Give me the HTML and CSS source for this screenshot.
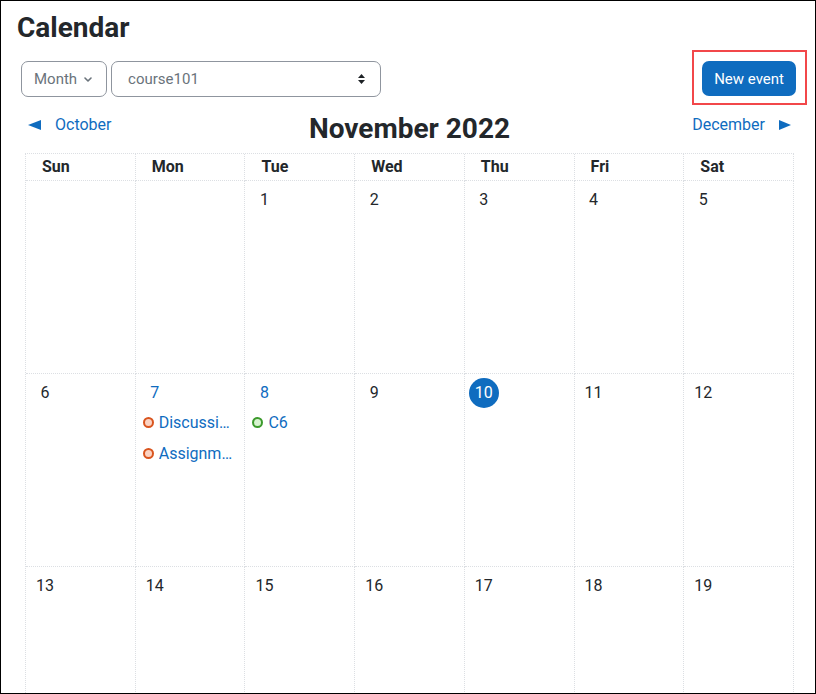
FILE: index.html
```html
<!DOCTYPE html>
<html lang="en">
<head>
<meta charset="utf-8">
<title>Calendar</title>
<link rel="stylesheet" href="styles.css">
</head>
<body>
<div class="page">
  <h2 class="title">Calendar</h2>
  <div class="controls">
    <div class="filters">
      <div class="select select-view">
        <span>Month</span>
        <svg class="chev" width="8" height="5" viewBox="0 0 8 5"><path d="M1 1 L4 4 L7 1" fill="none" stroke="#6a737b" stroke-width="1.6" stroke-linecap="round" stroke-linejoin="round"/></svg>
      </div>
      <div class="select select-course">
        <span>course101</span>
        <svg class="updown" width="7" height="10" viewBox="0 0 7 10"><path d="M3.5 0 L7 4 L0 4 Z M0 6 L7 6 L3.5 10 Z" fill="#1d2125"/></svg>
      </div>
    </div>
    <div class="highlight"><button class="btn-primary">New event</button></div>
  </div>
  <div class="nav">
    <a class="nav-link prev" href="#">
      <svg width="13" height="10" viewBox="0 0 13 10"><path d="M0 5 L13 0 L13 10 Z" fill="#0f6cbf"/></svg>
      <span>October</span>
    </a>
    <h3 class="month-title">November 2022</h3>
    <a class="nav-link next" href="#">
      <span>December</span>
      <svg width="12" height="10" viewBox="0 0 12 10"><path d="M12 5 L0 0 L0 10 Z" fill="#0f6cbf"/></svg>
    </a>
  </div>
  <div class="calendar">
    <div class="head">Sun</div>
    <div class="head">Mon</div>
    <div class="head">Tue</div>
    <div class="head">Wed</div>
    <div class="head">Thu</div>
    <div class="head">Fri</div>
    <div class="head">Sat</div>

    <div class="day"></div>
    <div class="day"></div>
    <div class="day"><span class="num">1</span></div>
    <div class="day"><span class="num">2</span></div>
    <div class="day"><span class="num">3</span></div>
    <div class="day"><span class="num">4</span></div>
    <div class="day"><span class="num">5</span></div>

    <div class="day"><span class="num">6</span></div>
    <div class="day">
      <a class="num link" href="#">7</a>
      <ul class="events">
        <li class="event"><span class="dot dot-orange"></span><a class="ev-name" href="#">Discussion forum</a></li>
        <li class="event"><span class="dot dot-orange"></span><a class="ev-name" href="#">Assignment 1</a></li>
      </ul>
    </div>
    <div class="day">
      <a class="num link" href="#">8</a>
      <ul class="events">
        <li class="event"><span class="dot dot-green"></span><a class="ev-name" href="#">C6</a></li>
      </ul>
    </div>
    <div class="day"><span class="num">9</span></div>
    <div class="day"><span class="num today">10</span></div>
    <div class="day"><span class="num">11</span></div>
    <div class="day"><span class="num">12</span></div>

    <div class="day"><span class="num">13</span></div>
    <div class="day"><span class="num">14</span></div>
    <div class="day"><span class="num">15</span></div>
    <div class="day"><span class="num">16</span></div>
    <div class="day"><span class="num">17</span></div>
    <div class="day"><span class="num">18</span></div>
    <div class="day"><span class="num">19</span></div>

    <div class="day"><span class="num">20</span></div>
    <div class="day"><span class="num">21</span></div>
    <div class="day"><span class="num">22</span></div>
    <div class="day"><span class="num">23</span></div>
    <div class="day"><span class="num">24</span></div>
    <div class="day"><span class="num">25</span></div>
    <div class="day"><span class="num">26</span></div>
  </div>
</div>
</body>
</html>
```
FILE: styles.css
```css
html, body {
  margin: 0;
  padding: 0;
  background: #fff;
}

body {
  font-family: Roboto, "Liberation Sans", Arial, sans-serif;
  color: #1d2125;
}

.page {
  box-sizing: border-box;
  width: 816px;
  height: 694px;
  border: 1px solid #000;
  padding: 10px 8px 0 16px;
  overflow: hidden;
}

.title {
  margin: 0;
  font-size: 28px;
  line-height: 34px;
  font-weight: 700;
  color: #23272b;
}

.controls {
  margin-top: 5px;
  display: flex;
  justify-content: space-between;
  align-items: flex-start;
}

.filters {
  display: flex;
  gap: 4px;
  margin-left: 4px;
  margin-top: 11px;
}

.select {
  box-sizing: border-box;
  height: 36px;
  border: 1px solid #8f959e;
  border-radius: 7px;
  display: flex;
  align-items: center;
  font-size: 15px;
  color: #6a737b;
}

.select-view {
  padding: 0 14px 0 12px;
  gap: 7px;
}

.select-course {
  width: 270px;
  padding: 0 15px 0 16px;
  justify-content: space-between;
}

.highlight {
  border: 2px solid #f2474a;
  padding: 9px 9px 7px 8px;
}

.btn-primary {
  display: block;
  height: 35px;
  padding: 0 12px;
  border: 0;
  border-radius: 7px;
  background: #0f6cbf;
  color: #fff;
  font-family: Roboto, "Liberation Sans", Arial, sans-serif;
  font-size: 15px;
}

.nav {
  display: grid;
  grid-template-columns: 1fr auto 1fr;
  align-items: start;
  padding: 6px 16px 0 11px;
}

.nav-link {
  display: flex;
  align-items: center;
  gap: 14px;
  margin-top: 2px;
  font-size: 16px;
  line-height: 24px;
  color: #0f6cbf;
  text-decoration: none;
}

.nav-link.next {
  justify-self: end;
}

.month-title {
  margin: 1px 0 0;
  font-size: 28px;
  line-height: 34px;
  font-weight: 700;
  color: #23272b;
}

.calendar {
  box-sizing: border-box;
  width: 769px;
  margin: 7px 0 0 8px;
  display: grid;
  grid-template-columns: repeat(7, 1fr);
  grid-template-rows: 27px;
  grid-auto-rows: 193px;
  border-top: 1px dotted #dcdfe3;
  border-left: 1px dotted #dcdfe3;
}

.head {
  border-right: 1px dotted #dcdfe3;
  border-bottom: 1px dotted #dcdfe3;
  padding: 0 16px;
  font-size: 16px;
  font-weight: 700;
  line-height: 26px;
  color: #23272b;
}

.day {
  min-width: 0;
  border-right: 1px dotted #dcdfe3;
  border-bottom: 1px dotted #dcdfe3;
  padding: 4px 8px 0 4px;
  font-size: 16px;
}

.num {
  display: block;
  width: 30px;
  height: 30px;
  line-height: 30px;
  text-align: center;
  color: #23272b;
  text-decoration: none;
}

.num.link {
  color: #0f6cbf;
}

.num.today {
  background: #0f6cbf;
  color: #fff;
  border-radius: 50%;
}

.events {
  list-style: none;
  margin: 2px 0 0;
  padding: 0;
}

.event {
  display: flex;
  align-items: center;
  gap: 5px;
  height: 24px;
  margin-bottom: 7px;
  padding-left: 3px;
}

.dot {
  box-sizing: border-box;
  flex: none;
  width: 11px;
  height: 11px;
  border-radius: 50%;
  border: 2px solid;
}

.dot-orange {
  border-color: #d9541e;
  background: #fbd3c3;
}

.dot-green {
  border-color: #3c9a2c;
  background: #d8f4d0;
}

.ev-name {
  min-width: 0;
  overflow: hidden;
  white-space: nowrap;
  text-overflow: ellipsis;
  color: #0f6cbf;
  text-decoration: none;
  font-size: 16px;
}
```
